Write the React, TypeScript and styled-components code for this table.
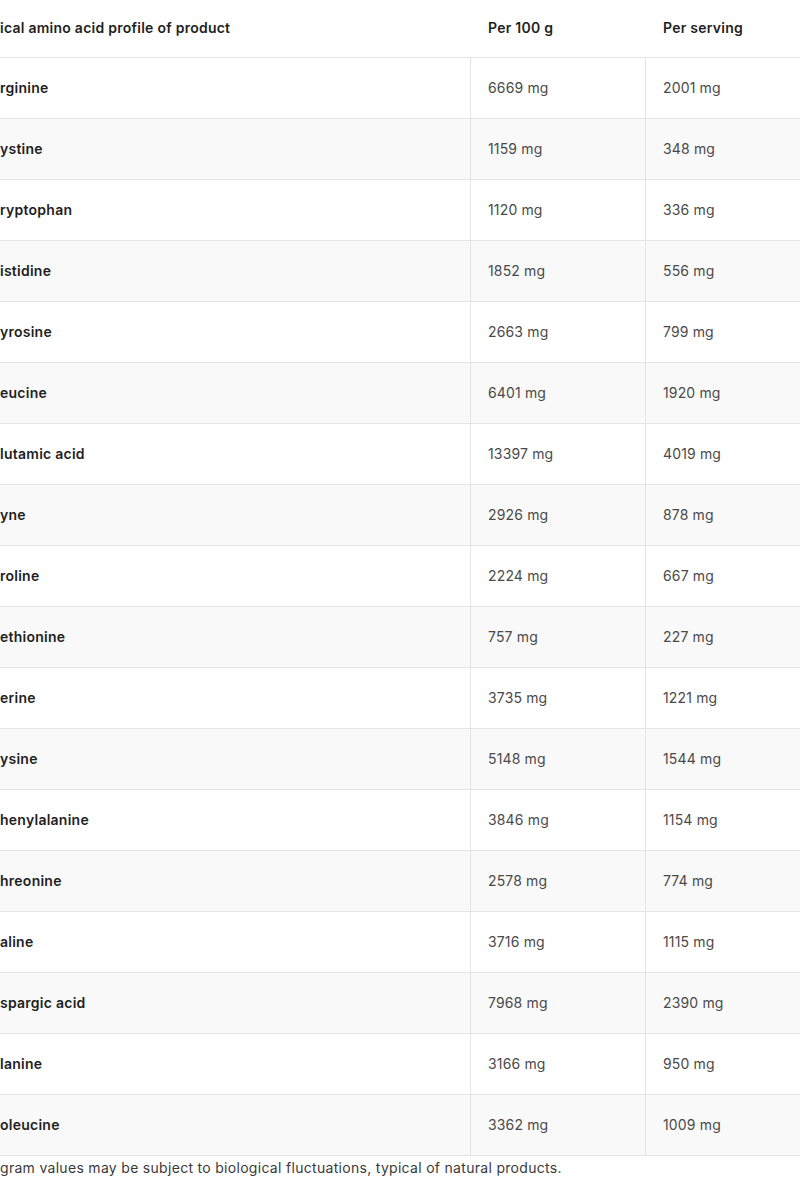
import React from "react";
import styled, { createGlobalStyle } from "styled-components";

const GlobalStyle = createGlobalStyle`
  html, body { margin: 0; padding: 0; background: #ffffff; }
  body { font-family: Inter, "Open Sans", "Liberation Sans", sans-serif; -webkit-font-smoothing: antialiased; }
`;

const Page = styled.div`
  width: 800px;
  overflow: hidden;
`;

const Table = styled.div`
  width: 820px;
  display: flex;
  flex-direction: column;
`;

const Row = styled.div<{ $shaded?: boolean; $head?: boolean }>`
  display: grid;
  grid-template-columns: 470px 175px 175px;
  height: ${(p) => (p.$head ? "57px" : "60px")};
  border-bottom: 1px solid #e4e4e4;
  background: ${(p) => (p.$shaded ? "#f9f9f9" : "#ffffff")};
`;

const Cell = styled.div<{ $first?: boolean; $head?: boolean }>`
  display: flex;
  align-items: center;
  padding-left: ${(p) => (p.$first ? "0" : p.$head ? "18px" : "17px")};
  padding-bottom: 2px;
  border-left: ${(p) => (p.$first || p.$head ? "none" : "1px solid #e4e4e4")};
  font-size: 14px;
  font-weight: ${(p) => (p.$first || p.$head ? 600 : 400)};
  color: ${(p) => (p.$first || p.$head ? "#1f1f1f" : "#4a4a4a")};
  letter-spacing: ${(p) => (p.$first || p.$head ? "0.25px" : "0.15px")};
  white-space: nowrap;
`;

const Note = styled.p`
  margin: 0;
  line-height: 24px;
  font-size: 14px;
  letter-spacing: 0.3px;
  color: #3a3a3a;
  white-space: nowrap;
`;

const rows: [string, string, string][] = [
  ["rginine", "6669 mg", "2001 mg"],
  ["ystine", "1159 mg", "348 mg"],
  ["ryptophan", "1120 mg", "336 mg"],
  ["istidine", "1852 mg", "556 mg"],
  ["yrosine", "2663 mg", "799 mg"],
  ["eucine", "6401 mg", "1920 mg"],
  ["lutamic acid", "13397 mg", "4019 mg"],
  ["yne", "2926 mg", "878 mg"],
  ["roline", "2224 mg", "667 mg"],
  ["ethionine", "757 mg", "227 mg"],
  ["erine", "3735 mg", "1221 mg"],
  ["ysine", "5148 mg", "1544 mg"],
  ["henylalanine", "3846 mg", "1154 mg"],
  ["hreonine", "2578 mg", "774 mg"],
  ["aline", "3716 mg", "1115 mg"],
  ["spargic acid", "7968 mg", "2390 mg"],
  ["lanine", "3166 mg", "950 mg"],
  ["oleucine", "3362 mg", "1009 mg"],
];

export default function App() {
  return (
    <Page>
      <GlobalStyle />
      <Table>
        <Row $head>
          <Cell $head $first>ical amino acid profile of product</Cell>
          <Cell $head>Per 100 g</Cell>
          <Cell $head>Per serving</Cell>
        </Row>
        {rows.map(([name, a, b], i) => (
          <Row key={name} $shaded={i % 2 === 1}>
            <Cell $first>{name}</Cell>
            <Cell>{a}</Cell>
            <Cell>{b}</Cell>
          </Row>
        ))}
      </Table>
      <Note>gram values may be subject to biological fluctuations, typical of natural products.</Note>
    </Page>
  );
}
